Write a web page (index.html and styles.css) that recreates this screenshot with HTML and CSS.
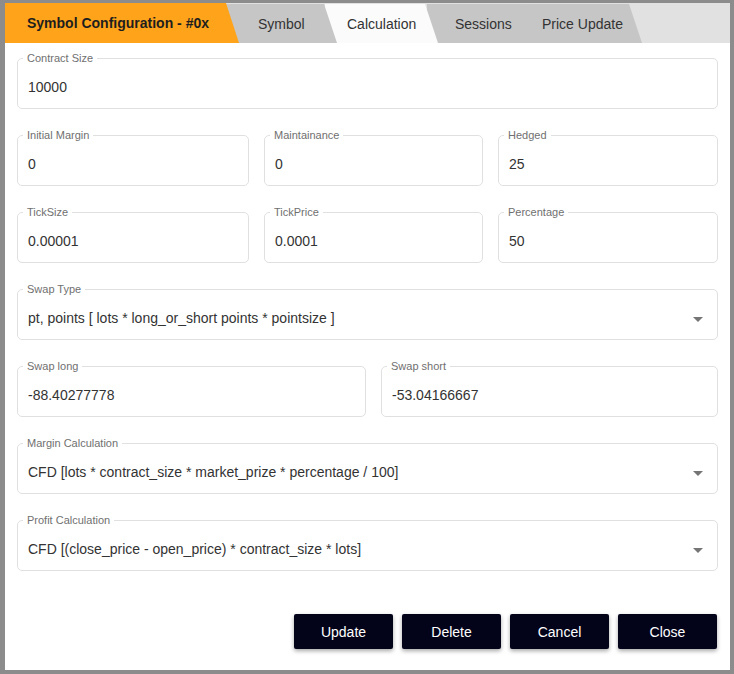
FILE: index.html
```html
<!DOCTYPE html>
<html>
<head>
<meta charset="utf-8">
<link rel="stylesheet" href="styles.css">
</head>
<body>
<div class="dialog">
  <div class="tabbar">
    <div class="tab tab-title">Symbol Configuration - #0x</div>
    <div class="tab tab-grey t2">Symbol</div>
    <div class="tab tab-active t3">Calculation</div>
    <div class="tab tab-grey t4">Sessions</div>
    <div class="tab tab-grey t5">Price Update</div>
  </div>
  <div class="content">
    <div class="row one">
      <fieldset class="field"><legend>Contract Size</legend><div class="value">10000</div></fieldset>
    </div>
    <div class="row three">
      <fieldset class="field"><legend>Initial Margin</legend><div class="value">0</div></fieldset>
      <fieldset class="field"><legend>Maintainance</legend><div class="value">0</div></fieldset>
      <fieldset class="field"><legend>Hedged</legend><div class="value">25</div></fieldset>
    </div>
    <div class="row three">
      <fieldset class="field"><legend>TickSize</legend><div class="value">0.00001</div></fieldset>
      <fieldset class="field"><legend>TickPrice</legend><div class="value">0.0001</div></fieldset>
      <fieldset class="field"><legend>Percentage</legend><div class="value">50</div></fieldset>
    </div>
    <div class="row one">
      <fieldset class="field"><legend>Swap Type</legend><div class="value select"><span>pt, points [ lots * long_or_short points * pointsize ]</span><svg class="arrow" viewBox="0 0 24 24" width="24" height="24"><path d="M7 10l5 5 5-5z"/></svg></div></fieldset>
    </div>
    <div class="row two">
      <fieldset class="field"><legend>Swap long</legend><div class="value">-88.40277778</div></fieldset>
      <fieldset class="field"><legend>Swap short</legend><div class="value">-53.04166667</div></fieldset>
    </div>
    <div class="row one">
      <fieldset class="field"><legend>Margin Calculation</legend><div class="value select"><span>CFD [lots * contract_size * market_prize * percentage / 100]</span><svg class="arrow" viewBox="0 0 24 24" width="24" height="24"><path d="M7 10l5 5 5-5z"/></svg></div></fieldset>
    </div>
    <div class="row one">
      <fieldset class="field"><legend>Profit Calculation</legend><div class="value select"><span>CFD [(close_price - open_price) * contract_size * lots]</span><svg class="arrow" viewBox="0 0 24 24" width="24" height="24"><path d="M7 10l5 5 5-5z"/></svg></div></fieldset>
    </div>
  </div>
  <div class="actions">
    <button class="btn">Update</button>
    <button class="btn">Delete</button>
    <button class="btn">Cancel</button>
    <button class="btn">Close</button>
  </div>
</div>
</body>
</html>
```

FILE: styles.css
```css
html, body {
  margin: 0;
  padding: 0;
}
body {
  background: #8c8c8c;
  width: 734px;
  height: 674px;
  overflow: hidden;
  font-family: "Liberation Sans", Arial, sans-serif;
}
.dialog {
  margin: 3px 0 0 5px;
  width: 725px;
  height: 667px;
  background: #ffffff;
  display: flex;
  flex-direction: column;
}
.tabbar {
  display: flex;
  height: 40px;
  background: #e1e1e1;
  flex-shrink: 0;
}
.tab {
  position: relative;
  height: 40px;
  display: flex;
  align-items: center;
  font-size: 14px;
  color: #333333;
  box-sizing: border-box;
  clip-path: polygon(0 0, calc(100% - 13px) 0, 100% 100%, 0 100%);
}
.tab-title {
  width: 234px;
  background: #ffa31a;
  color: #1e1e1e;
  font-weight: bold;
  padding-left: 22px;
  z-index: 5;
}
.tab-grey {
  background: #c6c6c6;
  margin-top: 1px;
  height: 39px;
}
.tab-active {
  background: #fbfbfb;
  margin-top: 1px;
  height: 39px;
}
.t2 {
  width: 112px;
  margin-left: -14px;
  padding-left: 33px;
  z-index: 4;
}
.t3 {
  width: 113px;
  margin-left: -12px;
  padding-left: 22px;
  z-index: 3;
}
.t4 {
  width: 111px;
  margin-left: -11px;
  padding-left: 28px;
  z-index: 2;
}
.t5 {
  width: 117px;
  margin-left: -13px;
  padding-left: 17px;
  z-index: 1;
}
.content {
  padding: 9px 12px 0 12px;
  display: flex;
  flex-direction: column;
  gap: 20px;
}
.row {
  display: grid;
  gap: 15px;
}
.row.one { grid-template-columns: 1fr; }
.row.three { grid-template-columns: 232px 219px 1fr; }
.row.two { grid-template-columns: 349px 1fr; }
.field {
  margin: 0;
  padding: 0 10px;
  border: 1px solid #e0e0e0;
  border-radius: 5px;
  min-width: 0;
}
.field legend {
  font-size: 11px;
  line-height: 12px;
  color: #707070;
  padding: 0 4px;
  margin-left: -5px;
}
.value {
  box-sizing: border-box;
  height: 44px;
  padding-top: 15px;
  font-size: 14px;
  line-height: 17px;
  color: #333333;
}
.select {
  display: flex;
  justify-content: space-between;
  align-items: flex-start;
}
.arrow {
  fill: #757575;
  margin-top: -3px;
  margin-right: -3px;
}
.actions {
  display: flex;
  justify-content: flex-end;
  gap: 9px;
  padding: 0 13px 0 0;
  margin-top: 43px;
}
.btn {
  width: 99px;
  height: 35px;
  border: none;
  border-radius: 2px;
  background: #03041a;
  color: #ffffff;
  font-family: "Liberation Sans", Arial, sans-serif;
  font-size: 14px;
  box-shadow: 0 2px 4px rgba(0, 0, 0, 0.35);
  padding: 0;
}
```
